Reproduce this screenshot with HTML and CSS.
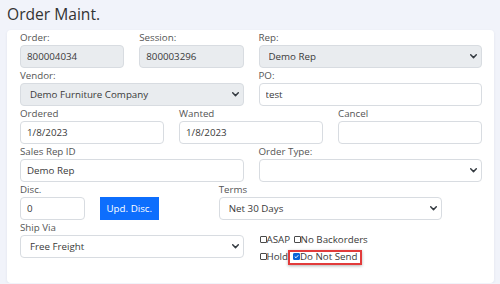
FILE: index.html
```html
<!DOCTYPE html>
<html lang="en">
<head>
    <meta charset="UTF-8">
    <meta name="viewport" content="width=device-width, initial-scale=1.0">
    <title>Order Maint.</title>
    <link rel="stylesheet" href="styles.css">
</head>
<body>
    <h1 class="page-title">Order Maint.</h1>

    <div class="card">
        <div class="form-grid">
            <div class="field span-3">
                <label for="order">Order:</label>
                <input type="text" id="order" class="ctl locked" value="800004034" readonly>
            </div>
            <div class="field span-3">
                <label for="session">Session:</label>
                <input type="text" id="session" class="ctl locked" value="800003296" readonly>
            </div>
            <div class="field span-6">
                <label for="rep">Rep:</label>
                <select id="rep" class="ctl sel locked">
                    <option>Demo Rep</option>
                </select>
            </div>

            <div class="field span-6">
                <label for="vendor">Vendor:</label>
                <select id="vendor" class="ctl sel locked">
                    <option>Demo Furniture Company</option>
                </select>
            </div>
            <div class="field span-6">
                <label for="po">PO:</label>
                <input type="text" id="po" class="ctl" value="test">
            </div>

            <div class="field span-4">
                <label for="ordered">Ordered</label>
                <input type="text" id="ordered" class="ctl" value="1/8/2023">
            </div>
            <div class="field span-4">
                <label for="wanted">Wanted</label>
                <input type="text" id="wanted" class="ctl" value="1/8/2023">
            </div>
            <div class="field span-4">
                <label for="cancel">Cancel</label>
                <input type="text" id="cancel" class="ctl" value="">
            </div>

            <div class="field span-6">
                <label for="salesrep">Sales Rep ID</label>
                <input type="text" id="salesrep" class="ctl" value="Demo Rep">
            </div>
            <div class="field span-6">
                <label for="ordertype">Order Type:</label>
                <select id="ordertype" class="ctl sel">
                    <option></option>
                </select>
            </div>

            <div class="field span-2">
                <label for="disc">Disc.</label>
                <input type="text" id="disc" class="ctl" value="0">
            </div>
            <div class="field span-3 bottom">
                <button type="button" class="btn-blue">Upd. Disc.</button>
            </div>
            <div class="field span-6">
                <label for="terms">Terms</label>
                <select id="terms" class="ctl sel">
                    <option>Net 30 Days</option>
                </select>
            </div>

            <div class="field span-6">
                <label for="shipvia">Ship Via</label>
                <select id="shipvia" class="ctl sel">
                    <option>Free Freight</option>
                </select>
            </div>
            <div class="field span-6 checks">
                <div class="check-line">
                    <label class="chk"><input type="checkbox">ASAP</label>
                    <label class="chk"><input type="checkbox">No Backorders</label>
                </div>
                <div class="check-line">
                    <label class="chk"><input type="checkbox">Hold</label><label class="chk flagged"><input type="checkbox" checked>Do Not Send</label>
                </div>
            </div>
        </div>
    </div>
</body>
</html>
```

FILE: styles.css
```css
body {
    font-family: "Open Sans", Arial, sans-serif;
    background-color: #f1f3fa;
    margin: 0;
    padding: 0 6px 0 7px;
    color: #333;
}
.page-title {
    font-size: 15.6px;
    font-weight: normal;
    line-height: 28px;
    margin: 0 0 2px 0;
    color: #333;
}
.card {
    background-color: #fff;
    border-radius: 4px;
    box-shadow: 0 1px 3px rgba(40, 50, 90, 0.08);
    padding: 0 12px 18px 13px;
}
.form-grid {
    display: grid;
    grid-template-columns: repeat(12, 1fr);
    column-gap: 15px;
}
.span-2 { grid-column: span 2; }
.span-3 { grid-column: span 3; }
.span-4 { grid-column: span 4; }
.span-6 { grid-column: span 6; }
.field {
    min-width: 0;
}
.field.bottom {
    align-self: end;
}
.field > label {
    display: block;
    font-size: 9.75px;
    line-height: 15px;
    color: #555;
}
.ctl {
    display: block;
    width: 100%;
    height: 23px;
    box-sizing: border-box;
    margin: 0;
    padding: 0 6px;
    border: 1px solid #d8dce1;
    border-radius: 4px;
    background-color: #fff;
    font-family: inherit;
    font-size: 9.75px;
    color: #3a3a3a;
    outline: none;
}
.ctl.locked {
    background-color: #e9ecef;
}
.sel {
    appearance: none;
    -webkit-appearance: none;
    padding: 0 20px 0 9px;
    background-image: url("data:image/svg+xml,%3csvg xmlns='http://www.w3.org/2000/svg' viewBox='0 0 16 16'%3e%3cpath fill='none' stroke='%23343a40' stroke-linecap='round' stroke-linejoin='round' stroke-width='2.6' d='m3 5 5 5 5-5'/%3e%3c/svg%3e");
    background-repeat: no-repeat;
    background-position: right 3px center;
    background-size: 9px 9px;
}
.btn-blue {
    display: block;
    height: 23px;
    padding: 0 7px;
    border: none;
    border-radius: 0;
    background-color: #0d6efd;
    color: #fff;
    font-family: inherit;
    font-size: 9.75px;
    cursor: pointer;
}
.checks {
    padding-top: 11px;
    font-size: 9.75px;
    color: #3a3a3a;
}
.check-line {
    line-height: 17px;
    white-space: nowrap;
}
.chk {
    display: inline;
}
.chk input {
    appearance: none;
    -webkit-appearance: none;
    box-sizing: border-box;
    width: 7px;
    height: 7px;
    margin: 0 0 0 1px;
    border: 1px solid #4a4a4a;
    border-radius: 1px;
    background-color: #fff;
    vertical-align: baseline;
}
.chk input:checked {
    border-color: #0b63d6;
    background-color: #0b63d6;
    background-image: url("data:image/svg+xml,%3csvg xmlns='http://www.w3.org/2000/svg' viewBox='0 0 10 10'%3e%3cpath fill='none' stroke='%23fff' stroke-width='2' d='M1.5 5.2 4 7.5 8.5 2.5'/%3e%3c/svg%3e");
    background-size: 100% 100%;
}
.flagged {
    display: inline-block;
    line-height: 9px;
    padding: 0 3px 2px 3px;
    border: 2px solid #e23b3b;
    box-shadow: 0 1px 3px rgba(0, 0, 0, 0.3);
}
.flagged input {
    margin-left: 0;
}
```
